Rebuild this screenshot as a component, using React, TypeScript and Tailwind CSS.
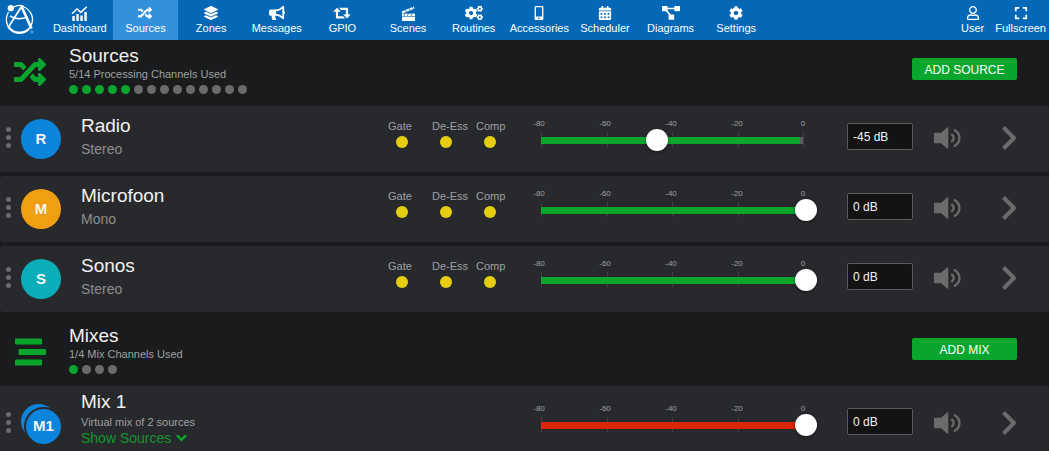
import React, { useState } from "react";
import {
  FaRandom,
  FaLayerGroup,
  FaBullhorn,
  FaCogs,
  FaMobileAlt,
  FaCalendarAlt,
  FaCog,
  FaRegUser,
  FaExpand,
} from "react-icons/fa";

function Logo() {
  return (
    <svg viewBox="0 0 30 30" className="h-[30px] w-[30px]" fill="none" stroke="#fff" aria-label="Home">
      <path d="M3.500 8C.2 13 .5 20 5 24.500c5 5 13 5.200 18 1 5-4.500 6-12 2-17.500C23 5 20 3 16.500 2" strokeWidth="1.300" />
      <path d="M3 22c4 7.500 14 9.500 21 3" strokeWidth="2.200" />
      <path d="M8 3.500C11 1.300 15 .9 18.500 2" strokeWidth="1.100" />
      <circle cx="5.800" cy="4.200" r="3.100" fill="#fff" stroke="none" />
      <path d="M3.500 23L16.500 2.500" strokeWidth="1.700" />
      <path d="M16.500 2.500L26.500 24.500" strokeWidth="2.600" />
      <path d="M5 12c5 3.200 12 3.200 17.500 .8" strokeWidth="1.500" />
      <circle cx="26.800" cy="28" r="1.100" strokeWidth=".6" opacity=".7" />
    </svg>
  );
}

function DashboardIcon() {
  return (
    <svg viewBox="0 0 16 15" className="h-[15px] w-[17px]" fill="currentColor">
      <path d="M.8 10h2.500v5H.8zM4.800 8h2.500v7H4.800zM8.800 9.500h2.500V15H8.800zM12.800 6h2.500v9h-2.500z" />
      <path d="M.5 7.800L5.500 3l3.800 3.400L15.200.8" fill="none" stroke="currentColor" strokeWidth="1.500" />
    </svg>
  );
}

function ClapperIcon() {
  return (
    <svg viewBox="0 0 15 15" className="h-[15px] w-[15px]" fill="currentColor">
      <path d="M.6 5.600L12.800.4l.9 2L1.500 7.500z" />
      <path d="M1 7.600h13V10H1z" />
      <path d="M1 10.600h13V15H1z" />
      <path d="M4 3.800l1.600 2M7.500 2.400l1.600 2M11 1l1.500 1.900M4 7.500l-1.200 2.400M7.500 7.500L6.300 9.900M11 7.500L9.800 9.900" stroke="#0568b6" strokeWidth=".8" />
    </svg>
  );
}

function RetweetIcon() {
  return (
    <svg viewBox="0 0 18 12" className="h-3 w-[18px]" fill="currentColor">
      <path d="M4 .8l3.800 4H5.100v4.400h5l2 2.200H3.900c-.6 0-1-.4-1-1V4.800H.2z" />
      <path d="M14 11.400l-3.800-4h2.700V3h-5l-2-2.200h8.200c.6 0 1 .4 1 1v5.600h2.700z" />
    </svg>
  );
}

function DiagramIcon() {
  return (
    <svg viewBox="0 0 18 14" className="h-[14px] w-[18px]" fill="currentColor">
      <rect x="0" y="0" width="5.600" height="5.200" rx=".6" />
      <rect x="12.400" y="0" width="5.600" height="5.200" rx=".6" />
      <rect x="6.600" y="8.600" width="5.600" height="5.200" rx=".6" />
      <path d="M5 2.500h8M4 4l4.500 5.500" fill="none" stroke="currentColor" strokeWidth="1.600" />
    </svg>
  );
}

function SpeakerIcon() {
  return (
    <svg viewBox="0 0 27 22" className="h-[22px] w-[27px]" fill="currentColor">
      <path d="M1 5.800h6L13.200.5c.5-.4 1.100-.2 1.100.5v20c0 .7-.6.900-1.100.5L7 16.200H1c-.6 0-1-.4-1-1V6.800c0-.6.400-1 1-1z" />
      <path d="M18 7.800c2.300 1.500 2.300 4.900 0 6.400M20.800 3.200c6.200 3.600 6.200 12 0 15.600" fill="none" stroke="currentColor" strokeWidth="2.300" strokeLinecap="round" />
    </svg>
  );
}

const navItems = [
  { label: "Dashboard", icon: <DashboardIcon /> },
  { label: "Sources", icon: <FaRandom />, active: true },
  { label: "Zones", icon: <FaLayerGroup /> },
  { label: "Messages", icon: <FaBullhorn className="h-4 w-4" /> },
  { label: "GPIO", icon: <RetweetIcon /> },
  { label: "Scenes", icon: <ClapperIcon /> },
  { label: "Routines", icon: <FaCogs className="h-4 w-[18px]" /> },
  { label: "Accessories", icon: <FaMobileAlt /> },
  { label: "Scheduler", icon: <FaCalendarAlt /> },
  { label: "Diagrams", icon: <DiagramIcon /> },
  { label: "Settings", icon: <FaCog /> },
];

function NavItem({ label, icon, active, className = "" }: { label: string; icon: React.ReactNode; active?: boolean; className?: string }) {
  return (
    <a
      href="#"
      aria-current={active ? "page" : undefined}
      className={`flex h-10 flex-col items-center pt-[5px] text-[11px] leading-[14px] whitespace-nowrap text-white ${active ? "bg-[#3390db]" : ""} ${className}`}
    >
      <span className="flex h-4 items-center text-[14px]">{icon}</span>
      {label}
    </a>
  );
}

function SectionHeader(props: { title: string; usage: string; used: number; total: number; action: string; icon: React.ReactNode; className?: string }) {
  return (
    <header className={`flex items-start pr-8 pl-[14px] pb-3 ${props.className ?? ""}`}>
      <div className="mt-4 flex h-8 w-8 items-center text-[#08a62c]">{props.icon}</div>
      <div className="mt-1 ml-[23px] flex-1">
        <h2 className="text-[19px] leading-6 text-[#f2f2f2]">{props.title}</h2>
        <p className="text-[11px] leading-[13px] text-[#a0a0a0]">{props.usage}</p>
        <div className="mt-1 flex gap-1">
          {Array.from({ length: props.total }, (_, i) => (
            <span key={i} className={`h-[9px] w-[9px] rounded-full ${i < props.used ? "bg-[#08a62c]" : "bg-[#6b6b6b]"}`} />
          ))}
        </div>
      </div>
      <button className="mt-[18px] h-[22px] w-[105px] rounded-[2px] bg-[#08a62c] pt-px text-[12px] leading-5 text-white">{props.action}</button>
    </header>
  );
}

function LevelSlider({ name, level, onChange, color, fill }: { name: string; level: number; onChange: (v: number) => void; color: string; fill: string }) {
  return (
    <div className="ml-[11px] w-[287px] pb-[9px]">
      <div className="flex h-[11px] items-center justify-between pr-[14px] pl-[9px] text-[8px] leading-[11px] text-[#a0a0a0]">
        {["-80", "-60", "-40", "-20", "0"].map((t) => (
          <span key={t} className="flex w-0 justify-center">{t}</span>
        ))}
      </div>
      <div className="grid h-[22px]">
        <div className="col-start-1 row-start-1 mt-[3px] mr-[13px] ml-[11px] flex h-[15px] justify-between">
          {[0, 1, 2, 3, 4].map((t) => (
            <span key={t} className="w-px bg-[#3f4042]" />
          ))}
        </div>
        <div className="col-start-1 row-start-1 mt-2 mr-[14px] ml-[11px] h-[7px] bg-[#5c5d5f]">
          <div className={`h-full ${color} ${fill}`} />
        </div>
        <input
          type="range"
          min={-80}
          max={0}
          value={level}
          aria-label={`${name} level`}
          onChange={(e) => onChange(Number(e.target.value))}
          className="relative col-start-1 row-start-1 h-[22px] w-full cursor-pointer appearance-none bg-transparent [&::-webkit-slider-thumb]:h-[22px] [&::-webkit-slider-thumb]:w-[22px] [&::-webkit-slider-thumb]:appearance-none [&::-webkit-slider-thumb]:rounded-full [&::-webkit-slider-thumb]:bg-white [&::-webkit-slider-thumb]:shadow-[0_1px_3px_rgba(0,0,0,0.5)]"
        />
      </div>
    </div>
  );
}

type ChannelProps = {
  name: string;
  initial: number;
  avatar: React.ReactNode;
  meters?: boolean;
  color?: string;
  fill?: string;
  className?: string;
  children: React.ReactNode;
};

function ChannelRow({ name, initial, avatar, meters, color = "bg-[#08a62c]", fill = "w-full", className = "min-h-[66px]", children }: ChannelProps) {
  const [level, setLevel] = useState(initial);
  return (
    <li className={`flex items-center rounded-[3px] bg-[#28292c] pr-8 pl-[6px] ${className}`}>
      <button aria-label={`Reorder ${name}`} className="mb-[3px] flex flex-col gap-[3px]">
        {[0, 1, 2].map((d) => (
          <span key={d} className="h-[5px] w-[5px] rounded-full bg-[#6b6b6b]" />
        ))}
      </button>
      <div className="ml-[10px] text-[15px] font-bold text-[#f4f4f4]">{avatar}</div>
      <div className="ml-5 flex-1 self-start">{children}</div>
      {meters && (
        <div className="flex w-[131px] pb-3">
          {["Gate", "De-Ess", "Comp"].map((m) => (
            <div key={m} className="w-11 shrink-0 text-[11px] leading-4 whitespace-nowrap text-[#a0a0a0]">
              {m}
              <span className="mt-[2px] ml-2 block h-3 w-3 rounded-full bg-[#e5ce10]" />
            </div>
          ))}
        </div>
      )}
      <LevelSlider name={name} level={level} onChange={setLevel} color={color} fill={fill} />
      <input
        aria-label={`${name} gain`}
        value={`${level} dB`}
        readOnly
        className="mb-[5px] ml-[30px] h-[27px] w-[66px] rounded-[2px] border border-[#5a5a5a] bg-[#131314] px-[5px] text-[12px] text-[#f2f2f2]"
      />
      <button aria-label={`Mute ${name}`} className="mb-[3px] ml-[21px] text-[#6b6b6b]">
        <SpeakerIcon />
      </button>
      <button aria-label={`Open ${name}`} className="mb-[3px] ml-10 text-[#6b6b6b]">
        <svg viewBox="0 0 16 24" className="h-6 w-4" fill="none" stroke="currentColor" strokeWidth="4" strokeLinejoin="round">
          <path d="M2.500 1.500L13 12 2.500 22.500" />
        </svg>
      </button>
    </li>
  );
}

function Avatar({ letter, color }: { letter: string; color: string }) {
  return <span className={`flex h-10 w-10 items-center justify-center rounded-full ${color}`}>{letter}</span>;
}

function SourceText({ title, kind }: { title: string; kind: string }) {
  return (
    <div className="pt-2">
      <h3 className="text-[19px] leading-6 text-[#f2f2f2]">{title}</h3>
      <p className="mt-px text-[14px] leading-5 text-[#8e8e8e]">{kind}</p>
    </div>
  );
}

const sources = [
  { name: "Radio", kind: "Stereo", letter: "R", color: "bg-[#0b84dc]", level: -45, fill: "w-[99%]" },
  { name: "Microfoon", kind: "Mono", letter: "M", color: "bg-[#f09f12]", level: 0, fill: "w-full" },
  { name: "Sonos", kind: "Stereo", letter: "S", color: "bg-[#0aadb8]", level: 0, fill: "w-full" },
];

export default function App() {
  return (
    <div className="h-screen overflow-hidden bg-[#1a1b1c] font-['Liberation_Sans',Arial,sans-serif]">
      <nav className="flex h-10 bg-[#0568b6]">
        <a href="#" className="mt-1 ml-[5px] w-[42px]">
          <Logo />
        </a>
        <div className="flex w-[722px]">
          {navItems.map((n) => (
            <NavItem key={n.label} {...n} className="min-w-0 flex-1" />
          ))}
        </div>
        <div className="ml-auto flex gap-[11px] pr-[3px]">
          <NavItem label="User" icon={<FaRegUser />} />
          <NavItem label="Fullscreen" icon={<FaExpand />} />
        </div>
      </nav>
      <main>
        <SectionHeader title="Sources" usage="5/14 Processing Channels Used" used={5} total={14} action="ADD SOURCE" icon={<FaRandom className="h-8 w-8" />} />
        <ul className="flex flex-col gap-1">
          {sources.map((s) => (
            <ChannelRow key={s.name} name={s.name} initial={s.level} fill={s.fill} meters avatar={<Avatar letter={s.letter} color={s.color} />}>
              <SourceText title={s.name} kind={s.kind} />
            </ChannelRow>
          ))}
        </ul>
        <SectionHeader
          className="pt-2"
          title="Mixes"
          usage="1/4 Mix Channels Used"
          used={1}
          total={4}
          action="ADD MIX"
          icon={
            <svg viewBox="0 0 32 32" className="h-8 w-8" fill="currentColor">
              <rect x="1" y="2.500" width="27" height="6" rx="1" />
              <rect x="4.500" y="13" width="27.500" height="6" rx="1" />
              <rect x="1" y="23.500" width="27" height="6" rx="1" />
            </svg>
          }
        />
        <ul>
          <ChannelRow
            name="Mix 1"
            initial={0}
            color="bg-[#d9260a]"
            className="min-h-[76px]"
            avatar={
              <span className="relative block h-10 w-10">
                <span className="absolute top-0 left-0 h-[35px] w-[35px] rounded-full bg-[#0b84dc]" />
                <span className="absolute right-0 bottom-0 flex h-[35px] w-[35px] items-center justify-center rounded-full bg-[#0b84dc] ring-2 ring-[#28292c]">M1</span>
              </span>
            }
          >
            <div className="pt-1">
              <h3 className="text-[19px] leading-6 text-[#f2f2f2]">Mix 1</h3>
              <p className="text-[11px] leading-4 text-[#a0a0a0]">Virtual mix of 2 sources</p>
              <button className="flex items-center gap-[5px] text-[14px] leading-4 text-[#12962e]">
                Show Sources
                <svg viewBox="0 0 11 8" className="h-2 w-[11px]" fill="none" stroke="#08a62c" strokeWidth="2.500">
                  <path d="M1 1.300l4.500 4.500L10 1.300" />
                </svg>
              </button>
            </div>
          </ChannelRow>
        </ul>
      </main>
    </div>
  );
}
